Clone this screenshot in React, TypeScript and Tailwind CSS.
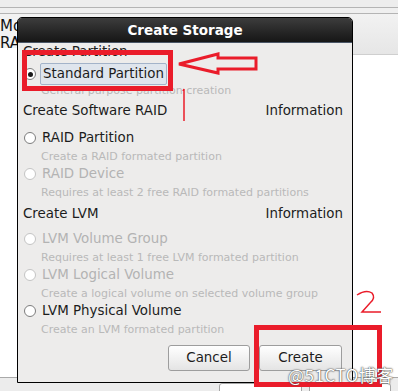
import React from "react";

function Radio({ enabled, selected }: { enabled: boolean; selected?: boolean }) {
  return (
    <span
      className={
        "flex h-[12px] w-[12px] shrink-0 items-center justify-center rounded-full border bg-white " +
        (enabled ? "border-[#7d7d7d]" : "border-[#c4c4c4] bg-[#f3f3f3]")
      }
    >
      {selected && <span className="h-[5px] w-[5px] rounded-full bg-[#1a1a1a]" />}
    </span>
  );
}

function Header({ text, info, h }: { text: string; info?: boolean; h: string }) {
  return (
    <div className={"flex items-center justify-between text-[13.4px] text-[#1c1c1c] " + h}>
      <span>{text}</span>
      {info && <span>Information</span>}
    </div>
  );
}

function Option({ label, desc, enabled, selected, rowH, descH }: {
  label: string;
  desc: string;
  enabled: boolean;
  selected?: boolean;
  rowH: string;
  descH: string;
}) {
  return (
    <>
      <div className={"flex items-center pl-[1px] " + rowH}>
        <Radio enabled={enabled} selected={selected} />
        {selected ? (
          <span className="ml-[4px] flex h-[22px] items-center rounded-[2px] border border-[#a3b3c9] bg-[#dfe5ed] px-[2px] text-[13.4px] text-[#1c1c1c]">
            {label}
          </span>
        ) : (
          <span className={"ml-[6px] text-[13.4px] " + (enabled ? "text-[#1c1c1c]" : "text-[#b3b3b3]")}>
            {label}
          </span>
        )}
      </div>
      <div className={"flex items-center pl-[18px] text-[11px] text-[#b9b9b9] " + descH}>{desc}</div>
    </>
  );
}

export default function App() {
  return (
    <div className="relative h-[391px] w-[398px] overflow-hidden bg-white font-['DejaVu_Sans',sans-serif]">
      {/* desktop behind */}
      <div className="flex h-full flex-col">
        <div className="h-[8px] border-b border-[#b4b4b4] bg-[#ededed]" />
        <div className="h-[6px] border-b border-[#b4b4b4] bg-[#efefef]" />
        <div className="flex">
          <div className="h-[34px] w-[40px] bg-[#f2f2f2] pt-[4px] text-[15px] leading-[17px] text-[#111]">
            <div>Mo</div>
            <div>RAI</div>
          </div>
          <div className="h-[41px] flex-1 border-b border-[#cfcfcf] bg-gradient-to-b from-[#f2f2f2] to-[#e6e6e6]" />
        </div>
        <div className="flex-1 border-b border-[#a9a9a9] bg-white" />
        <div className="flex h-[13px] gap-[7px] bg-[#ececec] pl-[219px] pt-[5px]">
          <div className="h-[14px] w-[83px] rounded-t-[3px] border border-[#a5a5a5] bg-white" />
          <div className="h-[14px] w-[82px] rounded-t-[3px] border border-[#a5a5a5] bg-white" />
        </div>
      </div>

      {/* dialog */}
      <div className="absolute left-[17px] top-[17px] flex h-[366px] w-[336px] flex-col rounded-t-[5px] border border-black bg-[#edeceb]">
        <div className="flex h-[25px] items-center justify-center rounded-t-[4px] border-b border-[#4a5666] bg-gradient-to-b from-[#3d3d3d] to-[#161616] text-[13.5px] font-bold text-white">
          Create Storage
        </div>
        <div className="flex flex-1 flex-col pl-[5px] pr-[9px]">
          <Header text="Create Partition" h="h-[18px]" />
          <div className="h-[2px]" />
          <Option label="Standard Partition" desc="General purpose partition creation" enabled selected rowH="h-[22px]" descH="h-[12px]" />
          <Header text="Create Software RAID" info h="h-[28px]" />
          <Option label="RAID Partition" desc="Create a RAID formated partition" enabled rowH="h-[26px]" descH="h-[12px]" />
          <Option label="RAID Device" desc="Requires at least 2 free RAID formated partitions" enabled={false} rowH="h-[22px]" descH="h-[16px]" />
          <Header text="Create LVM" info h="h-[26px]" />
          <Option label="LVM Volume Group" desc="Requires at least 1 free LVM formated partition" enabled={false} rowH="h-[24px]" descH="h-[14px]" />
          <Option label="LVM Logical Volume" desc="Create a logical volume on selected volume group" enabled={false} rowH="h-[20px]" descH="h-[18px]" />
          <Option label="LVM Physical Volume" desc="Create an LVM formated partition" enabled rowH="h-[16px]" descH="h-[22px]" />
          <div className="mt-[4px] flex justify-end gap-[9px] pr-[1px]">
            <button className="h-[26px] w-[82px] rounded-[3px] border border-[#9d9d9d] bg-gradient-to-b from-white to-[#e4e4e4] text-[13.4px] text-[#1c1c1c]">
              Cancel
            </button>
            <button className="h-[26px] w-[83px] rounded-[3px] border border-[#9d9d9d] bg-gradient-to-b from-white to-[#e4e4e4] text-[13.4px] text-[#1c1c1c]">
              Create
            </button>
          </div>
        </div>
      </div>

      {/* annotations */}
      <div className="absolute left-[22px] top-[50px] h-[41px] w-[151px] border-[5px] border-[#ea1c2a]" />
      <div className="absolute left-[254px] top-[325px] h-[62px] w-[128px] border-[5px] border-[#ea1c2a]" />
      <svg className="absolute left-0 top-0" width="398" height="391" viewBox="0 0 398 391" fill="none">
        <polygon
          points="179,64 218,54 218,58 256,58 256,69 218,69 218,73"
          stroke="#ea1c2a"
          strokeWidth="3"
          strokeLinejoin="miter"
        />
        <path d="M183 91 L184 89 L184 121" stroke="#ea1c2a" strokeWidth="1.5" />
        <path d="M357 295 Q366 289 372 293 Q376 298 370 303 L362 312 L381 312" stroke="#ea1c2a" strokeWidth="1.5" />
      </svg>
      <div className="absolute left-[288px] top-[362px] text-[17px] tracking-[0.5px] text-white [text-shadow:0_0_1px_#333,0_0_2px_#555] font-['Noto_Sans_CJK_SC',sans-serif]">
        @51CTO博客
      </div>
    </div>
  );
}
